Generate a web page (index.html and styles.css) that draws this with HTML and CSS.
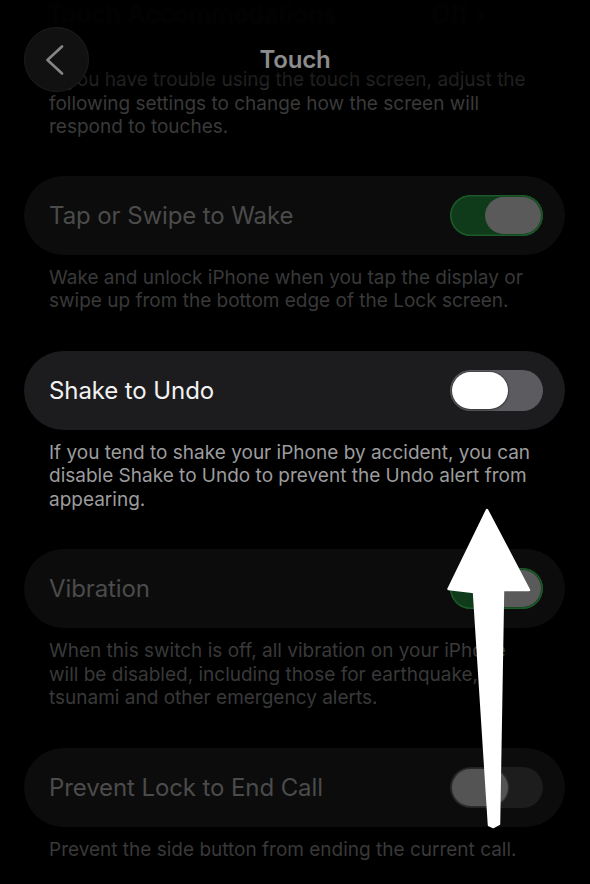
FILE: index.html
```html
<!DOCTYPE html>
<html lang="en">
  <head>
    <meta charset="UTF-8" />
    <meta name="viewport" content="width=device-width, initial-scale=1.0" />
    <title>Touch</title>
    <link rel="stylesheet" href="styles.css">
  </head>
  <body>
    <div class="screen">
      <header class="navbar">
        <button class="back" aria-label="Back">
          <svg width="18" height="30" viewBox="0 0 18 30">
            <polyline points="16,1.5 1.5,15 16,28.5" />
          </svg>
        </button>
        <h1>Touch</h1>
      </header>

      <div class="content">
        <div class="prev-row">
          <span>Touch Accommodations</span>
          <span>Off &rsaquo;</span>
        </div>

        <p class="intro">If you have trouble using the touch screen, adjust the following settings to change how the screen will respond to touches.</p>

        <section class="group">
          <div class="cell">
            <span class="label">Tap or Swipe to Wake</span>
            <span class="switch on"><span class="knob"></span></span>
          </div>
          <p class="note">Wake and unlock iPhone when you tap the display or swipe up from the bottom edge of the Lock screen.</p>
        </section>

        <section class="group focus">
          <div class="cell">
            <span class="label">Shake to Undo</span>
            <span class="switch"><span class="knob"></span></span>
          </div>
          <p class="note">If you tend to shake your iPhone by accident, you can disable Shake to Undo to prevent the Undo alert from appearing.</p>
        </section>

        <section class="group">
          <div class="cell">
            <span class="label">Vibration</span>
            <span class="switch on"><span class="knob"></span></span>
          </div>
          <p class="note">When this switch is off, all vibration on your iPhone will be disabled, including those for earthquake, tsunami and other emergency alerts.</p>
        </section>

        <section class="group">
          <div class="cell">
            <span class="label">Prevent Lock to End Call</span>
            <span class="switch"><span class="knob"></span></span>
          </div>
          <p class="note">Prevent the side button from ending the current call.</p>
        </section>
      </div>

      <!-- hand drawn pointer over the page -->
      <svg class="arrow" width="590" height="884" viewBox="0 0 590 884">
        <polygon points="487,510 529,590 503,590 499,824 493.5,827 489,825 474,592 448.5,589" />
      </svg>
    </div>
  </body>
</html>
```

FILE: styles.css
```css
      * {
        box-sizing: border-box;
      }
      body {
        margin: 0;
        background: #000000;
        font-family: Inter, "Noto Sans", sans-serif;
        color: #ffffff;
      }
      .screen {
        position: relative;
        width: 590px;
        height: 884px;
        overflow: hidden;
      }

      /* nav bar floats over the scrolled list */
      .navbar {
        position: absolute;
        top: 0;
        left: 0;
        right: 0;
        height: 100px;
        padding: 27px 24px 0;
        display: grid;
        grid-template-columns: 1fr auto 1fr;
        align-items: start;
        background: linear-gradient(
          to bottom,
          rgba(0, 0, 0, 0.9) 0%,
          rgba(0, 0, 0, 0.75) 60%,
          rgba(0, 0, 0, 0.45) 82%,
          rgba(0, 0, 0, 0) 100%
        );
        z-index: 2;
      }
      .back {
        width: 65px;
        height: 65px;
        border-radius: 50%;
        border: 1px solid #1d1d1d;
        background: #111111;
        display: flex;
        align-items: center;
        justify-content: center;
        padding: 0 4px 0 0;
      }
      .back svg polyline {
        fill: none;
        stroke: #868686;
        stroke-width: 2.6;
        stroke-linecap: round;
        stroke-linejoin: round;
      }
      .navbar h1 {
        margin: 0;
        height: 65px;
        line-height: 65px;
        font-size: 24px;
        font-weight: 600;
        color: #8c8c8c;
        letter-spacing: -0.2px;
      }

      .content {
        padding: 0 25px 0 24px;
      }
      .prev-row {
        display: flex;
        justify-content: space-between;
        margin-top: 0;
        padding: 0 80px 0 23px;
        height: 31px;
        line-height: 28px;
        font-size: 25px;
        font-weight: 500;
        color: #181818;
        filter: blur(1.2px);
      }
      .intro {
        margin: 37px 0 0;
        padding: 0 25px;
        font-size: 19px;
        line-height: 23.5px;
        color: #3a3a3a;
      }

      .group {
        margin-top: 37px;
      }
      .group + .group {
        margin-top: 38px;
      }
      .cell {
        height: 79px;
        border-radius: 40px;
        background: #0c0c0c;
        padding: 0 22px 0 25px;
        display: flex;
        align-items: center;
        justify-content: space-between;
      }
      .label {
        font-size: 24px;
        color: #4b4b4b;
        letter-spacing: -0.1px;
      }
      .note {
        margin: 0;
        padding: 11px 25px 0;
        font-size: 19px;
        line-height: 23.5px;
        color: #393939;
      }

      .switch {
        width: 93px;
        height: 41px;
        border-radius: 21px;
        padding: 2px;
        display: flex;
        justify-content: flex-start;
        background: #1d1d1d;
      }
      .switch .knob {
        width: 56px;
        height: 37px;
        border-radius: 19px;
        background: #545454;
        box-shadow: 0 0 0 1.5px #2a2a2a;
      }
      .switch.on {
        justify-content: flex-end;
        background: #0f3b1b;
        box-shadow: inset 0 0 0 1.5px #1c5b29;
      }
      .switch.on .knob {
        background: #5a5a5a;
        box-shadow: none;
      }

      /* highlighted row */
      .focus .cell {
        background: #1c1c1e;
      }
      .focus .label {
        color: #f2f2f2;
      }
      .focus .note {
        color: #9c9c9e;
      }
      .focus .switch {
        background: #5b5b60;
      }
      .focus .switch .knob {
        background: #ffffff;
        box-shadow: 0 0 0 1px rgba(0, 0, 0, 0.18), 0 1px 3px rgba(0, 0, 0, 0.3);
      }

      .arrow {
        position: absolute;
        top: 0;
        left: 0;
        pointer-events: none;
        z-index: 3;
      }
      .arrow polygon {
        fill: #ffffff;
        stroke: #ffffff;
        stroke-width: 2.5;
        stroke-linejoin: round;
      }
```
